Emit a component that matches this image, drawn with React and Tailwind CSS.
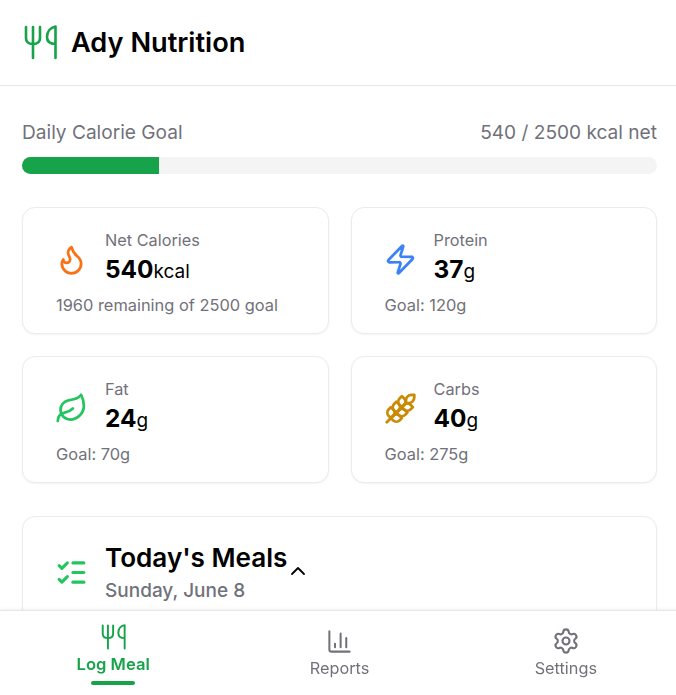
import React from "react";
import { Flame, Zap, Leaf, Wheat, ListChecks, ChevronUp, ChartColumn, Settings } from "lucide-react";

const ForkKnife = ({ className }) => (
  <svg viewBox="0 0 33 35" fill="none" stroke="currentColor" strokeWidth="2.6" strokeLinecap="round" strokeLinejoin="round" className={className}>
    <path d="M2 2v11c0 4 2.500 6 7 6s7-2 7-6V2" />
    <path d="M9 2v31" />
    <path d="M31.500 33V1.500c-5 1-8.500 5-8.500 10.500 0 4.500 3 7 8.500 7" />
  </svg>
);

const stats = [
  { label: "Net Calories", value: "540", unit: "kcal", note: "1960 remaining of 2500 goal", Icon: Flame, color: "text-[#f97316]" },
  { label: "Protein", value: "37", unit: "g", note: "Goal: 120g", Icon: Zap, color: "text-[#3b82f6]" },
  { label: "Fat", value: "24", unit: "g", note: "Goal: 70g", Icon: Leaf, color: "text-[#22c55e]" },
  { label: "Carbs", value: "40", unit: "g", note: "Goal: 275g", Icon: Wheat, color: "text-[#ca8a04]" },
];

const StatCard = ({ label, value, unit, note, Icon, color }) => (
  <div className="h-[127px] rounded-[13px] border border-[#ececee] bg-white px-[32px] pt-[21px] shadow-[0_1px_2px_rgba(0,0,0,0.05)]">
    <div className="flex items-center gap-[17px]">
      <Icon size={33} strokeWidth={2} className={color} />
      <div>
        <p className="text-[16.300px] leading-[22px] text-[#71717a]">{label}</p>
        <p className="mt-[1px] text-[24.400px] leading-[35px] font-bold text-black">
          {value}
          <span className="text-[19px] font-normal">{unit}</span>
        </p>
      </div>
    </div>
    <p className="mt-[5px] pl-[1px] text-[16.400px] leading-[22px] text-[#71717a]">{note}</p>
  </div>
);

export default function App() {
  return (
    <div className="h-screen w-[679px] overflow-hidden bg-white font-['Inter',sans-serif]">
      <header className="flex h-[86px] items-center gap-[14px] border-b border-[#e5e7eb] px-[24px]">
        <ForkKnife className="h-[35px] w-[33px] text-[#16a34a]" />
        <h1 className="mt-[2px] text-[27.200px] font-semibold text-black">Ady Nutrition</h1>
      </header>

      <main className="px-[22px] pt-[34px]">
        <div className="flex items-center justify-between text-[19.100px] leading-[24px] text-[#71717a]">
          <span>Daily Calorie Goal</span>
          <span>540 / 2500 kcal net</span>
        </div>
        <div className="mt-[13px] h-[17px] overflow-hidden rounded-full bg-[#f4f4f5]">
          <div className="h-full bg-[#16a34a]" style={{ width: `${(540 / 2500) * 100}%` }} />
        </div>

        <div className="mt-[33px] grid grid-cols-2 gap-[22px]">
          {stats.map((s) => (
            <StatCard key={s.label} {...s} />
          ))}
        </div>

        <section className="mt-[33px] h-[200px] rounded-[13px] border border-[#ececee] bg-white px-[32px] pt-[23px] shadow-[0_1px_2px_rgba(0,0,0,0.05)]">
          <div className="flex items-center gap-[17px]">
            <ListChecks size={33} strokeWidth={2.2} className="text-[#22c55e]" />
            <div>
              <div className="flex items-end">
                <h2 className="text-[26.100px] leading-[36px] font-semibold text-black">Today's Meals</h2>
                <ChevronUp size={24} strokeWidth={1.800} className="-mb-[7px] -ml-[1px] text-black" />
              </div>
              <p className="mt-[2px] text-[19px] leading-[26px] font-medium text-[#71717a]">Sunday, June 8</p>
            </div>
          </div>
        </section>
      </main>

      <nav className="fixed bottom-0 left-0 flex h-[85px] w-[679px] items-start border-t border-[#e5e7eb] bg-white pt-[12px] shadow-[0_-1px_3px_rgba(0,0,0,0.06)]">
        <div className="relative flex flex-1 flex-col items-center text-[#16a34a]">
          <ForkKnife className="mt-[1px] h-[26px] w-[25px]" />
          <span className="mt-[3px] text-[16.600px] leading-[22px] font-semibold">Log Meal</span>
          <span className="absolute top-[58px] h-[4px] w-[44px] rounded-full bg-[#16a34a]" />
        </div>
        <div className="flex flex-1 flex-col items-center text-[#71717a]">
          <ChartColumn size={27} strokeWidth={1.800} className="mt-[5px]" />
          <span className="mt-[2px] text-[16.300px] leading-[22px]">Reports</span>
        </div>
        <div className="flex flex-1 flex-col items-center text-[#71717a]">
          <Settings size={28} strokeWidth={1.800} className="mt-[4px]" />
          <span className="mt-[2px] text-[16.300px] leading-[22px]">Settings</span>
        </div>
      </nav>
    </div>
  );
}
